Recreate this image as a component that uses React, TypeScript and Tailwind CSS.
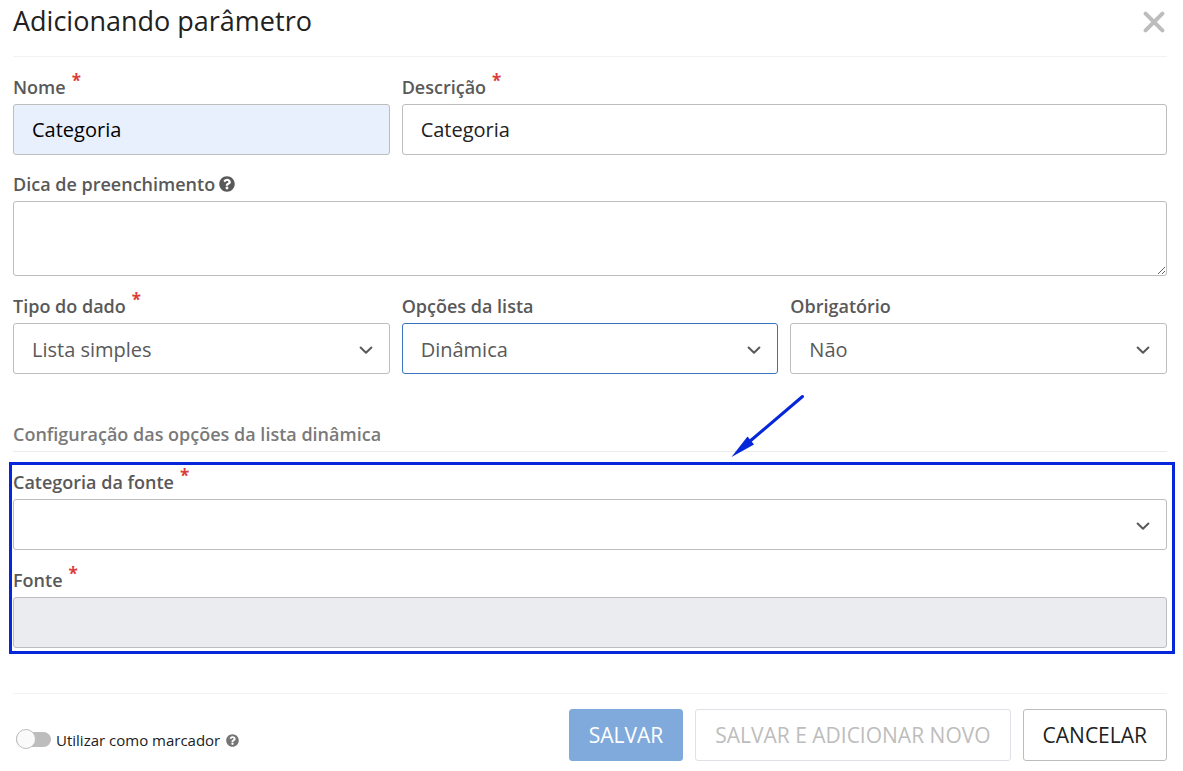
import { useState } from 'react';
import type { ReactNode } from 'react';
import { clsx } from 'clsx';
import { FaQuestionCircle } from 'react-icons/fa';

const controlStyles =
  'block w-full h-[51px] rounded-[3px] border px-[18px] text-[20px] outline-none';

const buttonStyles = 'h-[52px] rounded-[3px] border px-[19px] pt-[2px]';

interface FieldProps {
  id: string;
  label: string;
  required?: boolean;
  help?: boolean;
  className?: string;
  children: ReactNode;
}

function Field({ id, label, required, help, className, children }: FieldProps) {
  return (
    <div className={className}>
      <label
        htmlFor={id}
        className="mb-[6px] flex h-[22px] items-center text-[18px] leading-6 font-semibold text-[#595959]"
      >
        {label}
        {required && (
          <span className="-mt-1 ml-[6px] self-start text-[17px] leading-[18px] font-bold text-[#db3e3a]">
            *
          </span>
        )}
        {help && <FaQuestionCircle className="ml-1 size-4" />}
      </label>
      {children}
    </div>
  );
}

interface SelectProps {
  id: string;
  options: string[];
  active?: boolean;
}

function Select({ id, options, active }: SelectProps) {
  return (
    <div className="relative">
      <select
        id={id}
        className={clsx(
          controlStyles,
          'appearance-none bg-white pt-[2px] pr-12 text-[#595959]',
          active ? 'border-[#3b74bb]' : 'border-[#bdbdbd]'
        )}
      >
        {options.map((option) => (
          <option key={option}>{option}</option>
        ))}
      </select>
      <svg
        viewBox="0 0 14 10"
        className="pointer-events-none absolute top-[22px] right-[17px] h-[10px] w-[14px]"
        fill="none"
        stroke="#595959"
        strokeWidth="2"
        strokeLinecap="round"
        strokeLinejoin="round"
      >
        <path d="M1.6 2.5 L7 7.8 L12.4 2.5" />
      </svg>
    </div>
  );
}

export default function App() {
  const [name, setName] = useState('Categoria');
  const [description, setDescription] = useState('Categoria');
  const [marker, setMarker] = useState(false);

  return (
    <form
      className="bg-white pr-4 pb-[10px] pl-[13px] font-['Open_Sans',sans-serif] text-[#212121]"
      onSubmit={(e) => e.preventDefault()}
    >
      <header className="flex h-[57px] items-start justify-between border-b border-[#f2f2f2] pt-[3px]">
        <h1 className="text-[27px] leading-9">Adicionando parâmetro</h1>
        <button type="button" aria-label="Fechar" className="mt-2 mr-[2px]">
          <svg
            viewBox="0 0 22 22"
            className="size-[22px]"
            stroke="#bdbdbd"
            strokeWidth="4"
            strokeLinecap="round"
          >
            <path d="M2.6 2.6 L19.4 19.4 M19.4 2.6 L2.6 19.4" />
          </svg>
        </button>
      </header>

      <div className="mt-[19px] grid grid-cols-3 gap-x-3 gap-y-[18px]">
        <Field id="name" label="Nome" required>
          <input
            id="name"
            type="text"
            value={name}
            onChange={(e) => setName(e.target.value)}
            className={clsx(controlStyles, 'border-[#bdbdbd] bg-[#e8effd] text-black')}
          />
        </Field>
        <Field id="description" label="Descrição" required className="col-span-2">
          <input
            id="description"
            type="text"
            value={description}
            onChange={(e) => setDescription(e.target.value)}
            className={clsx(controlStyles, 'border-[#bdbdbd] bg-white')}
          />
        </Field>
        <Field id="hint" label="Dica de preenchimento" help className="col-span-3">
          <textarea
            id="hint"
            className="block h-[75px] w-full resize-y rounded-[3px] border border-[#bdbdbd] px-[18px] py-2 text-[20px] outline-none"
          />
        </Field>
      </div>

      <div className="mt-[19px] grid grid-cols-3 gap-x-3">
        <Field id="type" label="Tipo do dado" required>
          <Select id="type" options={['Lista simples']} />
        </Field>
        <Field id="list-options" label="Opções da lista">
          <Select id="list-options" options={['Dinâmica', 'Estática']} active />
        </Field>
        <Field id="mandatory" label="Obrigatório">
          <Select id="mandatory" options={['Não', 'Sim']} />
        </Field>
      </div>

      <h2 className="mt-12 border-b border-[#ebebeb] pb-[5px] text-[18px] leading-6 font-semibold text-[#7a7a7a]">
        Configuração das opções da lista dinâmica
      </h2>

      <section className="relative mt-[19px] flex flex-col gap-[19px]">
        <Field id="source-category" label="Categoria da fonte" required>
          <Select id="source-category" options={['']} />
        </Field>
        <Field id="source" label="Fonte" required>
          <input
            id="source"
            type="text"
            disabled
            className={clsx(controlStyles, 'border-[#bdbdbd] bg-[#ebecf0]')}
          />
        </Field>

        {/* highlight around the source fields */}
        <div className="pointer-events-none absolute -top-[9px] -right-2 -bottom-[6px] -left-1 border-3 border-[#0527d9]" />
        <svg
          viewBox="0 0 74 64"
          className="pointer-events-none absolute -top-[78px] left-[718px] h-[64px] w-[74px]"
        >
          <path d="M71.5 3.5 L18 49" stroke="#0527d9" strokeWidth="3" strokeLinecap="round" />
          <path d="M0.5 64 L16.5 43.5 L23 51.5 Z" fill="#0527d9" />
        </svg>
      </section>

      <footer className="mt-[45px] flex items-center justify-between border-t border-[#f2f2f2] pt-[15px]">
        <div className="mt-2 ml-[3px] flex items-center">
          <input
            id="marker"
            type="checkbox"
            role="switch"
            checked={marker}
            onChange={(e) => setMarker(e.target.checked)}
            className="flex h-[15px] w-[35px] appearance-none items-center rounded-full bg-[#bdbdbd] before:size-5 before:shrink-0 before:rounded-full before:border before:border-[#bdbdbd] before:bg-[#fafafa] checked:bg-[#80aadc] checked:before:ml-[15px]"
          />
          <label htmlFor="marker" className="ml-[5px] flex items-center pt-[2px] text-[15px] leading-6">
            Utilizar como marcador
            <FaQuestionCircle className="ml-[6px] size-[13px] text-[#757575]" />
          </label>
        </div>
        <div className="flex gap-3 text-[21px]">
          <button type="submit" className={clsx(buttonStyles, 'border-[#80aadc] bg-[#80aadc] text-white')}>
            SALVAR
          </button>
          <button type="button" disabled className={clsx(buttonStyles, 'border-[#e0e1e6] text-[#bdbdbd]')}>
            SALVAR E ADICIONAR NOVO
          </button>
          <button type="button" className={clsx(buttonStyles, 'border-[#bdbdbd]')}>
            CANCELAR
          </button>
        </div>
      </footer>
    </form>
  );
}
